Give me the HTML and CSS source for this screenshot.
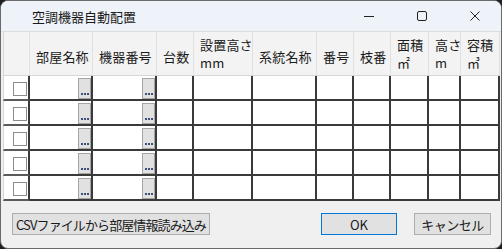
FILE: index.html
```html
<!DOCTYPE html>
<html lang="ja">
<head>
    <meta charset="UTF-8">
    <title>空調機器自動配置</title>
    <link rel="stylesheet" href="styles.css">
</head>
<body>
<div class="window">
    <div class="titlebar">
        <span class="title">空調機器自動配置</span>
        <div class="controls">
            <span class="ctl"><svg width="12" height="12" viewBox="0 0 12 12"><path d="M1 6.5h10" stroke="#222" stroke-width="1"/></svg></span>
            <span class="ctl"><svg width="12" height="12" viewBox="0 0 12 12"><rect x="1.5" y="1.5" width="9" height="9" rx="1.5" fill="none" stroke="#222" stroke-width="1"/></svg></span>
            <span class="ctl"><svg width="12" height="12" viewBox="0 0 12 12"><path d="M1.5 1.5l9 9M10.5 1.5l-9 9" stroke="#222" stroke-width="1"/></svg></span>
        </div>
    </div>

    <div class="grid">
        <div class="hd corner"></div>
        <div class="hd">部屋名称</div>
        <div class="hd">機器番号</div>
        <div class="hd">台数</div>
        <div class="hd two">設置高さ<br>mm</div>
        <div class="hd">系統名称</div>
        <div class="hd">番号</div>
        <div class="hd">枝番</div>
        <div class="hd two">面積<br>㎡</div>
        <div class="hd two">高さ<br>m</div>
        <div class="hd two">容積<br>㎥</div>
    </div>
    <div class="grid rows" id="rows"></div>

    <div class="footer">
        <button class="btn csv">CSVファイルから部屋情報読み込み</button>
        <span class="spacer"></span>
        <button class="btn ok">OK</button>
        <button class="btn cancel">キャンセル</button>
    </div>
</div>
<script>
    var rows = document.getElementById('rows');
    for (var i = 0; i < 5; i++) {
        var html = '<div class="rh"><span class="check"></span></div>';
        for (var k = 0; k < 10; k++) {
            if (k < 2) {
                html += '<div class="cell"><span class="dots"></span></div>';
            } else {
                html += '<div class="cell"></div>';
            }
        }
        rows.insertAdjacentHTML('beforeend', html);
    }
</script>
</body>
</html>
```

FILE: styles.css
```css
* {
    margin: 0;
    padding: 0;
    box-sizing: border-box;
}

body {
    width: 502px;
    height: 249px;
    background: #1e1e1e;
    font-family: "Noto Sans CJK JP", "Noto Sans", sans-serif;
    color: #1a1a1a;
}

.window {
    width: 502px;
    height: 249px;
    border: 1px solid #6a6a6a;
    border-radius: 8px;
    background: #f0f0f0;
    overflow: hidden;
    display: flex;
    flex-direction: column;
}

.titlebar {
    height: 31px;
    background: #eef2f9;
    display: flex;
    align-items: center;
    border-bottom: 1px solid #dcdcdc;
}

.title {
    padding-left: 31px;
    font-size: 13px;
    padding-top: 1px;
}

.controls {
    margin-left: auto;
    display: flex;
}

.ctl {
    width: 53px;
    height: 31px;
    display: flex;
    align-items: center;
    justify-content: center;
}

.grid {
    display: grid;
    grid-template-columns: 27px 63px 64px 37px 59px 64px 37px 37px 38px 32px 39px;
    margin-left: 2px;
    background: #fff;
    width: 497px;
}

.hd {
    height: 44px;
    background: #f3f3f3;
    border-right: 1px solid #e1e1e1;
    border-bottom: 1px solid #d6d6d6;
    font-size: 13px;
    padding: 5px 0 0 6px;
    display: flex;
    align-items: center;
    letter-spacing: 0.2px;
    white-space: nowrap;
}

.hd.two {
    line-height: 18px;
    padding-top: 1px;
}

.corner {
    border-left: 1px solid #d6d6d6;
}

.rh {
    height: 25px;
    border-left: 1px solid #d6d6d6;
    border-right: 2px solid #3a3a3a;
    border-bottom: 2px solid #5a5a5a;
    display: flex;
    align-items: center;
    padding: 2px 0 0 9px;
}

.check {
    width: 14px;
    height: 14px;
    border: 1px solid #8c8c8c;
    background: #fff;
}

.cell {
    height: 25px;
    border-right: 2px solid #3a3a3a;
    border-bottom: 2px solid #3a3a3a;
    display: flex;
    justify-content: flex-end;
    align-items: flex-end;
}

.dots {
    position: relative;
    width: 13px;
    height: 21px;
    background: #e1e1e1;
    border: 1px solid #a5a5a5;
}

.dots::after {
    content: "";
    position: absolute;
    left: 2px;
    bottom: 3px;
    width: 2px;
    height: 2px;
    background: #3b4f7a;
    box-shadow: 3px 0 0 #3b4f7a, 6px 0 0 #3b4f7a;
}

.footer {
    flex: 1;
    display: flex;
    align-items: flex-start;
    padding: 12px 10px 0 11px;
}

.spacer {
    flex: 1;
}

.btn {
    height: 22px;
    background: #e1e1e1;
    border: 1px solid #adadad;
    font-family: "Noto Sans CJK JP", "Noto Sans", sans-serif;
    font-size: 13px;
    color: #1a1a1a;
}

.csv {
    width: 198px;
    letter-spacing: -0.9px;
}

.ok {
    width: 76px;
    border-color: #0078d7;
}

.cancel {
    width: 77px;
    margin-left: 17px;
    letter-spacing: -0.5px;
}
```
